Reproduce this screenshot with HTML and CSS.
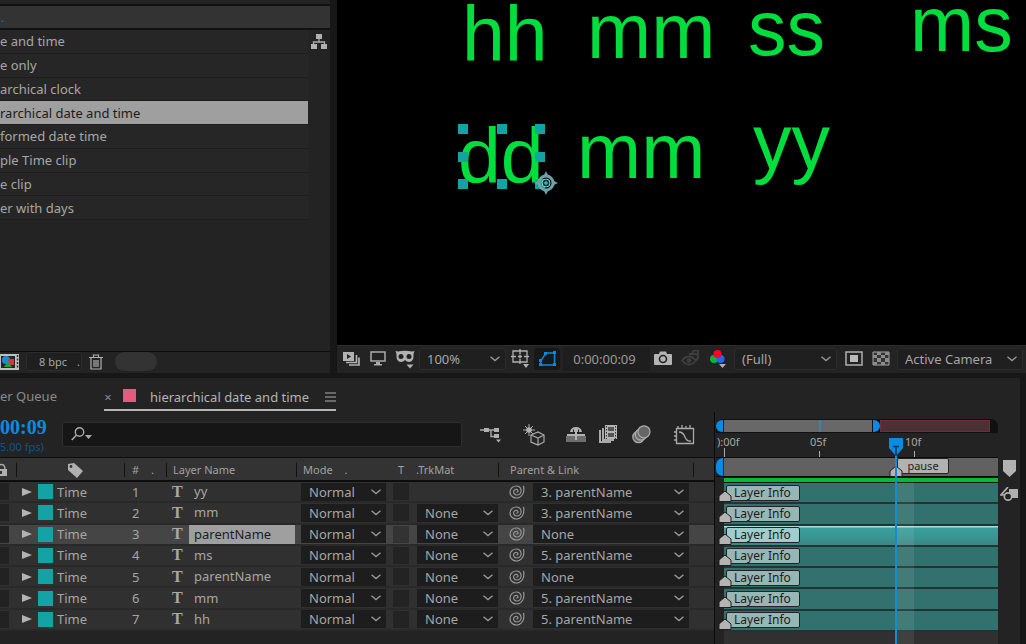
FILE: index.html
```html
<!DOCTYPE html>
<html lang="en">
<head>
<meta charset="utf-8">
<title>hierarchical date and time</title>
<link rel="stylesheet" href="styles.css">
</head>
<body>
<svg class="defs" aria-hidden="true">
  <symbol id="chev" viewBox="0 0 10 6"><path d="M.5.8 5 4.6 9.5.8" fill="none" stroke="#999" stroke-width="1.3"/></symbol>
  <symbol id="whip" viewBox="0 0 16 14"><path d="M14.5.8C15.5 6 14.2 10.2 10.5 12.2 6 14.4 1 11.500 1 7 1 3 4.500.8 7.700 1 11 1.200 12.500 4 12 6.500 11.500 9 9.500 10 7.800 10 5.800 10 4.500 8.500 4.600 6.800 4.700 5.200 6 4.200 7.500 4.300 9 4.500 9.300 6 8.600 6.800L7.300 7.200" fill="none" stroke="#969696" stroke-width="1.200"/></symbol>
  <symbol id="flag" viewBox="0 0 14 12"><path d="M1 11.500V6L7 1l6 5v5.500z" fill="#b4b4b4" stroke="#1c1c1c"/></symbol>
</svg>

<main class="workspace">
  <section class="project" aria-label="Project">
    <div class="project-head">.</div>
    <div class="project-body">
      <ul class="items">
        <li>e and time</li>
        <li>e only</li>
        <li>archical clock</li>
        <li class="selected">rarchical date and time</li>
        <li>formed date time</li>
        <li>ple Time clip</li>
        <li>e clip</li>
        <li>er with days</li>
      </ul>
      <button class="flow" aria-label="Project flowchart"><svg width="18" height="17" viewBox="0 0 18 17"><path d="M9 5v4M3.500 11V9h11v2" fill="none" stroke="#aaa" stroke-width="1.300"/><path d="M6 1h6v5H6zM1 11h6v5H1zM11 11h6v5h-6z" fill="#b0b0b0"/></svg></button>
    </div>
    <footer class="project-foot">
      <button class="interpret" aria-label="Interpret footage"><svg width="19" height="16" viewBox="0 0 19 16"><path fill="#c0c0c0" d="M0 0h19v16H0z"/><path fill="#252525" d="M1 2h14v12H1z"/><path d="M17.500 1v14" stroke="#333" stroke-width="1.500" stroke-dasharray="2 1.500"/><circle cx="6" cy="6" r="4" fill="#168cdf"/><path fill="#ef2944" d="M8 5h6v6H8z"/><path fill="#17a63a" d="M8 7l4 6H4z"/></svg></button>
      <button class="depth"><span>8 bpc</span><span>.</span></button>
      <button class="trash" aria-label="Delete"><svg width="14" height="16" viewBox="0 0 14 16"><path d="M0 3.500h14M4.500 3V1h5v2M2 4v11h10V4M5 6v7M7 6v7M9 6v7" fill="none" stroke="#b0b0b0" stroke-width="1.200"/></svg></button>
      <span class="thumb"></span>
    </footer>
  </section>

  <section class="viewer" aria-label="Composition">
    <div class="canvas">
      <span class="glyph hh">hh</span><span class="glyph min">mm</span><span class="glyph ss">ss</span><span class="glyph ms">ms</span>
      <span class="glyph dd">dd</span><span class="glyph mon">mm</span><span class="glyph yy">yy</span>
      <svg class="handles" width="102" height="72" viewBox="0 0 102 72"><path fill="#13a3a5" d="M1 0h10v10H1zM40 0h10v10H40zM78 0h10v10H78zM1 28h10v10H1zM78 28h10v10H78zM1 55h10v10H1zM40 55h10v10H40zM78 55h10v10H78z"/><g transform="translate(89 59)"><path fill="#719da0" d="M-2-8 0-12 2-8zM-2 8 0 12 2 8zM-8-2-12 0-8 2zM8-2 12 0 8 2z"/><circle r="7" fill="none" stroke="#6ea4a7" stroke-width="3"/><circle r="4" fill="#073238" stroke="#8bd0d1"/><path d="M-2 0h4M0-2v4" stroke="#3eb4b6" stroke-width="1.500"/></g></svg>
    </div>
    <div class="viewer-bar">
      <button aria-label="Always preview"><svg width="17" height="14" viewBox="0 0 17 14"><path fill="#b2b2b2" d="M0 0h11v9H0z"/><path fill="#222" d="M4 2l4 2.500L4 7z"/><path d="M13.500 3v7.500H3M16 5.500V13H6" fill="none" stroke="#b2b2b2" stroke-width="1.700"/></svg></button>
      <button aria-label="Main viewer"><svg width="16" height="15" viewBox="0 0 16 15"><path d="M1 1h14v9H1z" fill="none" stroke="#aaa" stroke-width="1.500"/><path fill="#aaa" d="M6 11h4v2h2v1.500H4V13h2z"/></svg></button>
      <button aria-label="Mask view"><svg width="20" height="20" viewBox="0 0 20 20"><path fill="#b2b2b2" d="M3 2.500Q10 1 17 2.500l2.500-.5-1 3Q19 13 14 13q-2.500 0-4-2-1.500 2-4 2-5 0-4.500-8l-1-3zM11.500 15.500h7l-3.500 4z"/><circle cx="6" cy="7.500" r="2.500" fill="#222"/><circle cx="14" cy="7.500" r="2.500" fill="#222"/></svg></button>
      <span class="drop boxed"><select aria-label="Magnification"><option>100%</option></select><svg><use href="#chev"/></svg></span>
      <button aria-label="Grid and guides"><svg width="19" height="19" viewBox="0 0 19 19"><path d="M2 2h14v11H2zM9 0v5M9 10v5M0 7.500h5M13 7.500h5M7 7.500h4M9 5.500v4" fill="none" stroke="#b0b0b0" stroke-width="1.300"/><path fill="#b0b0b0" d="M12 15h6l-3 4z"/></svg></button>
      <button class="toggle" aria-label="Toggle mask visibility"><svg width="19" height="16" viewBox="0 0 19 16"><path d="M2.500 14 3 9.500 8 2h8.500v12z" fill="none" stroke="#078be2" stroke-width="1.400"/><path fill="#078be2" d="M1 12h3v3H1zM1 8h3v3H1zM6 1h3v3H6zM15 0h3v3h-3zM15 12h3v3h-3z"/></svg></button>
      <span class="clock">0:00:00:09</span>
      <button aria-label="Snapshot"><svg width="18" height="15" viewBox="0 0 18 15"><path fill="#b4b4b4" d="M1 3h4l1-2.500h6L13 3h4q1 0 1 1v9q0 1-1 1H1q-1 0-1-1V4q0-1 1-1z"/><circle cx="9" cy="8" r="3.500" fill="none" stroke="#222" stroke-width="1.600"/></svg></button>
      <button aria-label="Show snapshot"><svg width="19" height="17" viewBox="0 0 19 17"><path d="M1 10.500q7-8 14 0-7 8-14 0zM8 4h6q3 0 3 3t-3 3M11 3l2-2.500h4V5" fill="none" stroke="#3f3f3f" stroke-width="1.800"/><circle cx="8" cy="10.500" r="2.300" fill="#3f3f3f"/></svg></button>
      <button aria-label="Channels"><svg width="16" height="18" viewBox="0 0 16 18"><circle cx="4" cy="9" r="4" fill="#04b83d"/><circle cx="10.500" cy="9" r="4" fill="#2368f5"/><circle cx="7.500" cy="4" r="4" fill="#fa0528"/><path fill="#b0b0b0" d="M9 14h7l-3.500 4z"/></svg></button>
      <span class="drop boxed"><select aria-label="Resolution"><option>(Full)</option></select><svg><use href="#chev"/></svg></span>
      <button aria-label="Region of interest"><svg width="18" height="15" viewBox="0 0 18 15"><path d="M1 1h16v13H1z" fill="none" stroke="#b0b0b0" stroke-width="1.500"/><path fill="#b8b8b8" d="M5 4h8v7H5z"/></svg></button>
      <button aria-label="Transparency grid"><svg width="18" height="15" viewBox="0 0 18 15"><path d="M1 1h16v13H1z" fill="#343434" stroke="#a5a5a5"/><path fill="#8c8c8c" d="M5 1h4v3H5zM13 1h4v3h-4zM1 4h4v3H1zM9 4h4v3H9zM5 7h4v4H5zM13 7h4v4h-4zM1 11h4v3H1zM9 11h4v3H9z"/></svg></button>
      <span class="drop boxed"><select aria-label="View"><option>Active Camera</option></select><svg><use href="#chev"/></svg></span>
    </div>
  </section>

  <section class="timeline" aria-label="Timeline">
    <nav class="tabs">
      <a class="queue" href="#queue">er Queue</a>
      <div class="tab"><button aria-label="Close tab">×</button><i></i><a href="#comp">hierarchical date and time</a><button aria-label="Panel menu"><svg width="11" height="10" viewBox="0 0 11 10"><path d="M0 1h11M0 5h11M0 9h11" stroke="#b0b0b0"/></svg></button></div>
    </nav>
    <div class="lower">
      <div class="layers">
        <div class="tools">
          <div class="timecode"><b>00:09</b><span>5.00 fps)</span></div>
          <label class="search"><svg width="22" height="15" viewBox="0 0 22 15"><circle cx="8.500" cy="5" r="4.200" fill="none" stroke="#aaa" stroke-width="1.400"/><path d="M5.500 8 .8 13" stroke="#aaa" stroke-width="1.600"/><path fill="#aaa" d="M14 8h7l-3.500 4z"/></svg><input type="search" aria-label="Search layers"></label>
          <div class="switches">
            <button aria-label="Mini-flowchart"><svg width="22" height="16" viewBox="0 0 22 16"><path d="M0 3h15M11 3v6.500h4" fill="none" stroke="#aaa" stroke-width="1.400"/><path fill="#b0b0b0" d="M4 1h5v4H4zM14 1h5v4h-5zM14 7h5v4h-5zM16 12.500h5l-2.500 3z"/></svg></button>
            <button aria-label="Draft 3D"><svg width="22" height="22" viewBox="0 0 22 22"><path d="M6 0v12M0 6h12M2 2l8 8M10 2l-8 8" stroke="#aaa" stroke-width="1"/><circle cx="6" cy="6" r="2.800" fill="#b2b2b2"/><path d="M8 11l7-3 6 3v7l-6 3-7-3zM8 11l7 3 6-3M15 14v7" fill="#252525" stroke="#aaa" stroke-width="1.200"/></svg></button>
            <button aria-label="Hide shy layers"><svg width="20" height="15" viewBox="0 0 20 15"><path fill="#6d6d6d" d="M0 9h20v6H0z"/><path fill="#b2b2b2" d="M1 7h18v2H1zM4 5q1-5 6-5t6 5zM9 4h2v9H9z"/><path d="M7.500 2.500V7M12.500 2.500V7" stroke="#222"/></svg></button>
            <button aria-label="Frame blending"><svg width="18" height="19" viewBox="0 0 18 19"><path fill="#a8a8a8" d="M0 5h2v11h10v2H0zM3 3h2v11h10v2H3z"/><path fill="#b5b5b5" d="M6 0h12v14H6z"/><path d="M7.500 1v13M16.500 1v13" stroke="#333" stroke-dasharray="1.500 1.500"/><path fill="#555" d="M9 2h6v4H9zM9 8h6v4H9z"/></svg></button>
            <button aria-label="Motion blur"><svg width="19" height="19" viewBox="0 0 19 19"><g fill="#666" stroke="#aaa" stroke-width="1.300"><circle cx="6.500" cy="12" r="5.700"/><circle cx="9" cy="9.500" r="5.700"/><circle cx="12" cy="6.800" r="6"/></g></svg></button>
            <button aria-label="Graph editor"><svg width="21" height="20" viewBox="0 0 21 20"><path d="M2.500 3.500h17v15h-17zM4 1v2M8 0v3M12 1v2M16 0v3M0 7h2M0 11h2M0 15h2M5 7q4 0 6 5t6 4" fill="none" stroke="#aaa" stroke-width="1.300"/></svg></button>
          </div>
        </div>
        <table class="grid">
          <thead><tr>
            <th><svg width="9" height="14" viewBox="0 0 9 14"><path d="M0 1.700q5-1.500 5 5" fill="none" stroke="#aaa" stroke-width="1.500"/><path fill="#b0b0b0" d="M0 6h7v7H0z"/><path fill="#333" d="M0 8h2v3H0z"/></svg></th>
            <th class="tagcol"><svg width="16" height="15" viewBox="0 0 16 15"><path fill="#b0b0b0" d="M1 1 7 0l9 8-6 7-9-8z"/><circle cx="4" cy="3.500" r="1.400" fill="#333"/></svg></th>
            <th class="num">#<span>.</span></th>
            <th class="namehead">Layer Name</th>
            <th class="modehead">Mode<span>.</span></th>
            <th class="matte">T</th>
            <th class="trk">.TrkMat</th>
            <th class="parenthead" colspan="2">Parent &amp; Link</th>
          </tr></thead>
          <tbody>
            <tr><td><i class="lock"></i></td><td class="label"><button aria-label="Expand layer 1"></button><i></i>Time</td><td class="num">1</td><td class="name"><b>T</b><span>yy</span></td><td><span class="drop"><select aria-label="Mode 1"><option>Normal</option></select><svg><use href="#chev"/></svg></span></td><td><i class="check"></i></td><td></td><td class="whip"><svg><use href="#whip"/></svg></td><td><span class="drop"><select aria-label="Parent 1"><option>3. parentName</option></select><svg><use href="#chev"/></svg></span></td></tr>
            <tr><td><i class="lock"></i></td><td class="label"><button aria-label="Expand layer 2"></button><i></i>Time</td><td class="num">2</td><td class="name"><b>T</b><span>mm</span></td><td><span class="drop"><select aria-label="Mode 2"><option>Normal</option></select><svg><use href="#chev"/></svg></span></td><td><i class="check"></i></td><td><span class="drop"><select aria-label="Track matte 2"><option>None</option></select><svg><use href="#chev"/></svg></span></td><td class="whip"><svg><use href="#whip"/></svg></td><td><span class="drop"><select aria-label="Parent 2"><option>3. parentName</option></select><svg><use href="#chev"/></svg></span></td></tr>
            <tr class="selected"><td><i class="lock"></i></td><td class="label"><button aria-label="Expand layer 3"></button><i></i>Time</td><td class="num">3</td><td class="name"><b>T</b><span>parentName</span></td><td><span class="drop"><select aria-label="Mode 3"><option>Normal</option></select><svg><use href="#chev"/></svg></span></td><td><i class="check"></i></td><td><span class="drop"><select aria-label="Track matte 3"><option>None</option></select><svg><use href="#chev"/></svg></span></td><td class="whip"><svg><use href="#whip"/></svg></td><td><span class="drop"><select aria-label="Parent 3"><option>None</option></select><svg><use href="#chev"/></svg></span></td></tr>
            <tr><td><i class="lock"></i></td><td class="label"><button aria-label="Expand layer 4"></button><i></i>Time</td><td class="num">4</td><td class="name"><b>T</b><span>ms</span></td><td><span class="drop"><select aria-label="Mode 4"><option>Normal</option></select><svg><use href="#chev"/></svg></span></td><td><i class="check"></i></td><td><span class="drop"><select aria-label="Track matte 4"><option>None</option></select><svg><use href="#chev"/></svg></span></td><td class="whip"><svg><use href="#whip"/></svg></td><td><span class="drop"><select aria-label="Parent 4"><option>5. parentName</option></select><svg><use href="#chev"/></svg></span></td></tr>
            <tr><td><i class="lock"></i></td><td class="label"><button aria-label="Expand layer 5"></button><i></i>Time</td><td class="num">5</td><td class="name"><b>T</b><span>parentName</span></td><td><span class="drop"><select aria-label="Mode 5"><option>Normal</option></select><svg><use href="#chev"/></svg></span></td><td><i class="check"></i></td><td><span class="drop"><select aria-label="Track matte 5"><option>None</option></select><svg><use href="#chev"/></svg></span></td><td class="whip"><svg><use href="#whip"/></svg></td><td><span class="drop"><select aria-label="Parent 5"><option>None</option></select><svg><use href="#chev"/></svg></span></td></tr>
            <tr><td><i class="lock"></i></td><td class="label"><button aria-label="Expand layer 6"></button><i></i>Time</td><td class="num">6</td><td class="name"><b>T</b><span>mm</span></td><td><span class="drop"><select aria-label="Mode 6"><option>Normal</option></select><svg><use href="#chev"/></svg></span></td><td><i class="check"></i></td><td><span class="drop"><select aria-label="Track matte 6"><option>None</option></select><svg><use href="#chev"/></svg></span></td><td class="whip"><svg><use href="#whip"/></svg></td><td><span class="drop"><select aria-label="Parent 6"><option>5. parentName</option></select><svg><use href="#chev"/></svg></span></td></tr>
            <tr><td><i class="lock"></i></td><td class="label"><button aria-label="Expand layer 7"></button><i></i>Time</td><td class="num">7</td><td class="name"><b>T</b><span>hh</span></td><td><span class="drop"><select aria-label="Mode 7"><option>Normal</option></select><svg><use href="#chev"/></svg></span></td><td><i class="check"></i></td><td><span class="drop"><select aria-label="Track matte 7"><option>None</option></select><svg><use href="#chev"/></svg></span></td><td class="whip"><svg><use href="#whip"/></svg></td><td><span class="drop"><select aria-label="Parent 7"><option>5. parentName</option></select><svg><use href="#chev"/></svg></span></td></tr>
          </tbody>
        </table>
      </div>

      <div class="time">
        <div class="navigator"><i class="cap left"></i><i class="range"></i><i class="cap right"></i><i class="rest"></i></div>
        <div class="ruler"><span class="t0">):00f</span><span class="t5">05f</span><span class="t10">10f</span></div>
        <div class="work"><i class="cap left"></i><div class="area"><span class="marker">pause</span><svg class="pause-flag" width="14" height="12"><use href="#flag"/></svg></div></div>
        <div class="cache"></div>
        <div class="tracks">
          <div class="track"><svg width="14" height="12"><use href="#flag"/></svg><span class="marker">Layer Info</span></div>
          <div class="track"><svg width="14" height="12"><use href="#flag"/></svg><span class="marker">Layer Info</span></div>
          <div class="track selected"><svg width="14" height="12"><use href="#flag"/></svg><span class="marker">Layer Info</span></div>
          <div class="track"><svg width="14" height="12"><use href="#flag"/></svg><span class="marker">Layer Info</span></div>
          <div class="track"><svg width="14" height="12"><use href="#flag"/></svg><span class="marker">Layer Info</span></div>
          <div class="track"><svg width="14" height="12"><use href="#flag"/></svg><span class="marker">Layer Info</span></div>
          <div class="track"><svg width="14" height="12"><use href="#flag"/></svg><span class="marker">Layer Info</span></div>
        </div>
        <div class="below"></div>
        <i class="frame"></i>
        <svg class="head" width="14" height="18" viewBox="0 0 14 18"><path fill="#088be3" d="M0 0h14v10l-7 8-7-8z"/><path d="M4 8.500h6M7 8v9" stroke="#173650" stroke-width="1.500"/></svg>
        <i class="playhead"></i>
      </div>

      <div class="side">
        <button aria-label="Composition marker bin"><svg width="15" height="17" viewBox="0 0 15 17"><path fill="#b2b2b2" d="M1 0h13v11l-6.500 6L1 11z"/></svg></button>
        <button aria-label="Composition button"><svg width="18" height="15" viewBox="0 0 18 15"><path fill="#b0b0b0" d="M9 2h9v9H9z"/><path d="M8 0 1 8h9" fill="none" stroke="#b0b0b0" stroke-width="1.700"/><circle cx="8" cy="9.500" r="3.700" fill="#222" stroke="#b0b0b0" stroke-width="1.700"/></svg></button>
      </div>
    </div>
  </section>
</main>
</body>
</html>
```
FILE: styles.css
```css
* { box-sizing: border-box; }
body { margin: 0; background: #171717; color: #a6a6a6; font: 13px/18px "Noto Sans", "Open Sans", sans-serif; }
button, select, input { font: inherit; color: inherit; background: none; border: 0; margin: 0; padding: 0; }
button { display: grid; place-items: center; }
svg { display: block; }
i { font-style: normal; }
a { color: inherit; text-decoration: none; }
.defs { position: absolute; width: 0; height: 0; }

.workspace { display: grid; grid-template: 1fr auto / 330px 1fr; column-gap: 6px; row-gap: 5px; min-height: 100vh; overflow: hidden; }

/* Project panel */
.project { display: flex; flex-direction: column; background: #232323; padding-top: 4px; }
.project-head { height: 26px; background: #333; border-top: 2px solid #111; border-bottom: 2px solid #111; color: #3c78a0; font-size: 11px; line-height: 23px; padding-left: 1px; }
.project-body { display: flex; flex: 1; }
.items { list-style: none; margin: 0; padding: 0; width: 308px; height: 190px; display: grid; grid-template-rows: repeat(8, 1fr); }
.items li { display: flex; align-items: center; background: #262626; border-bottom: 1px solid #1d1d1d; white-space: nowrap; }
.items .selected { background: #9f9f9f; color: #1c1c1c; }
.flow { width: 22px; height: 22px; }
.project-foot { display: flex; align-items: center; height: 22px; border-top: 1px solid #0c0c0c; padding-bottom: 2px; }
.interpret { width: 19px; }
.depth { display: flex; justify-content: space-between; width: 56px; margin-left: 7px; padding: 0 1px 0 12px; height: 19px; font-size: 11px; background: #1f1f1f; border: 1px solid #2b2b2b; border-radius: 3px; }
.trash { margin-left: 7px; }
.thumb { width: 42px; height: 19px; border-radius: 10px; background: #333; margin-left: 12px; }

/* Composition viewer */
.viewer { display: flex; flex-direction: column; min-width: 0; background: #232323; border-left: 1px solid #151515; }
.canvas { position: relative; flex: 1; min-height: 345px; background: #000; overflow: hidden; }
.glyph { position: absolute; font: 77px/80px "Liberation Sans", Arial, sans-serif; color: #00de3d; }
.hh { left: 125px; top: -6px; }
.min { left: 250px; top: -9px; }
.ss { left: 411px; top: -12px; }
.ms { left: 573px; top: -16px; }
.dd { left: 121px; top: 116px; }
.mon { left: 240px; top: 111px; }
.yy { left: 416px; top: 102px; }
.handles { position: absolute; left: 120px; top: 124px; }
.viewer-bar { display: grid; grid-template-columns: 22px 32px 22px 93px 22px 32px 87px 25px 30px 26px 109px 28px 26px 1fr; align-items: center; height: 28px; padding: 0 0 2px 3px; border-top: 1px solid #2c2c2c; }
.clock { text-align: center; background: #1e1e1e; line-height: 24px; color: #999; padding-right: 4px; }
.toggle { width: 26px; height: 22px; margin: 0 auto; background: #181818; border-radius: 3px; }

.drop { display: grid; grid-template-columns: 1fr 10px; align-items: center; background: #1d1d1d; min-width: 0; padding-right: 5px; }
.drop select { grid-area: 1 / 1 / 2 / 3; appearance: none; width: 100%; height: 18px; line-height: 18px; padding-left: 8px; outline: 0; }
.drop svg { grid-area: 1 / 2; width: 10px; height: 6px; pointer-events: none; }
.boxed { height: 22px; margin: 0 3px; background: #1f1f1f; border: 1px solid #2c2c2c; border-radius: 3px; }
.boxed select { padding-left: 7px; }

/* Timeline panel */
.timeline { grid-column: 1 / 3; background: #232323; margin-right: 6px; }
.tabs { display: flex; height: 34px; align-items: start; line-height: 32px; }
.queue { width: 104px; color: #8a8a8a; padding-top: 2px; }
.tab { display: grid; grid-template-columns: 8px 13px 1fr 12px; column-gap: 11px; align-items: center; width: 232px; height: 33px; padding-top: 3px; border-bottom: 2px solid #b5b5b5; color: #b4b4b4; }
.tab i { width: 13px; height: 13px; background: #e55b7d; margin-bottom: 3px; }
.tab a { padding-left: 3px; white-space: nowrap; }
.tab button { color: #8c8c8c; }

.lower { display: grid; grid-template-columns: 715px 1fr 22px; }
.tools { display: flex; align-items: center; height: 45px; }
.timecode { width: 62px; display: flex; flex-direction: column; color: #0a8be0; white-space: nowrap; padding-top: 3px; }
.timecode b { font: bold 20px/21px "Liberation Serif", "Times New Roman", serif; }
.timecode span { font-size: 11px; line-height: 18px; color: #0b5686; }
.search { display: flex; align-items: center; width: 400px; height: 25px; padding-left: 8px; background: #161616; border: 1px solid #2e2e2e; border-radius: 3px; }
.search input { flex: 1; min-width: 0; outline: 0; }
.switches { display: grid; grid-template-columns: 44px 42px 42px 22px 44px 42px; margin-left: 7px; flex: 1; }
.switches button { min-width: 0; }

.layers { border-right: 1px solid #0b0b0b; }
.grid { display: block; }
.grid tr { display: grid; grid-template-columns: 17px 108px 42px 130px 91px 28px 83px 34px 1fr; align-items: stretch; }
.grid thead { display: block; }
.grid thead tr { height: 25px; background: #333; border-top: 1px solid #0d0d0d; border-bottom: 2px solid #0d0d0d; padding-right: 20px; }
.grid th { position: relative; display: flex; align-items: center; padding: 2px 0 0; font-size: 11px; font-weight: 400; color: #a0a0a0; }
.grid th::after { content: ""; position: absolute; right: 0; top: 5px; height: 14px; border-right: 1px solid #111; }
.grid .modehead::after, .grid .matte::after { display: none; }
.grid .tagcol { padding-left: 50px; }
.grid th.num { padding-left: 7px; gap: 12px; }
.grid .namehead { padding-left: 6px; }
.grid .modehead { padding-left: 6px; gap: 12px; }
.grid .matte { padding-left: 10px; }
.grid .parenthead { grid-column: 8 / 10; padding-left: 11px; }
.grid tbody { display: grid; grid-template-rows: repeat(7, 1fr); height: 149px; }
.grid tbody tr { background: #303030; border-bottom: 2px solid #292929; }
.grid tbody .selected { background: #454545; }
.grid td { display: grid; align-items: center; padding: 0; min-width: 0; }
.lock { width: 9px; height: 17px; background: #222; }
.check { width: 16px; height: 17px; margin-left: 5px; background: #232323; }
.selected .check { background: #333; }
.grid .label { display: flex; padding-left: 5px; gap: 4px; }
.label button { width: 0; height: 0; border: solid transparent; border-width: 4px 0 4px 10px; border-left-color: #b3b3b3; margin-right: 2px; }
.label i { width: 15px; height: 15px; background: #14a3a4; }
.grid td.num { padding-left: 7px; }
.grid .name { display: flex; padding-left: 5px; }
.name b { width: 17px; font: bold 16px/18px "Liberation Serif", serif; color: #a8a8a8; }
.name span { padding-left: 5px; line-height: 19px; }
.selected .name span { background: #9f9f9f; color: #1d1d1d; width: 106px; }
.grid td .drop { height: 18px; }
.grid td:nth-child(5) .drop { margin-left: 4px; width: 85px; }
.grid td:nth-child(7) .drop { margin-left: 1px; width: 81px; }
.grid td:nth-child(9) .drop { width: 156px; }
.whip svg { width: 16px; height: 14px; margin-left: 10px; }

/* Time graph */
.time { position: relative; display: flex; flex-direction: column; padding-top: 7px; padding-left: 1px; min-width: 0; }
.navigator { display: flex; height: 14px; padding: 1px 8px 1px 0; background: #101010; border-radius: 7px 7px 0 0; }
.cap { width: 7px; background: #088be3; }
.cap.left { border-radius: 7px 0 0 7px; }
.cap.right { border-radius: 0 7px 7px 0; }
.range { width: 148px; background: linear-gradient(90deg, transparent 95px, #3d83b0 95px, #3d83b0 97px, transparent 97px) #686868; margin: 0 1px; }
.rest { flex: 1; background: #4c3034; border: 1px solid #742c3c; }
.ruler { position: relative; height: 24px; font-size: 11px; line-height: 17px; }
.ruler span { position: absolute; top: 0; height: 24px; }
.ruler span::after { content: ""; position: absolute; bottom: 0; left: 9px; height: 6px; border-left: 1px solid #aaa; }
.t0 { left: 1px; }
.ruler .t0::after { left: 7px; height: 9px; }
.t5 { left: 94px; }
.t10 { left: 189px; }
.work { display: flex; height: 20px; border-top: 1px solid #0b0b0b; border-bottom: 1px solid #0b0b0b; }
.work .left { margin-right: 1px; }
.area { position: relative; flex: 1; background: #616161; }
.marker { display: block; font-size: 12px; line-height: 14px; color: #1d1d1d; border: 1px solid #222; border-radius: 2px; }
.area .marker { position: absolute; left: 173px; top: 0; width: 52px; background: #b2b2b2; text-align: center; font-size: 11px; }
.pause-flag { position: absolute; left: 165px; top: 7px; }
.cache { height: 6px; margin-left: 8px; background: #04ba38; border-top: 1px solid #111; border-bottom: 1px solid #111; }
.tracks { display: grid; grid-template-rows: repeat(7, 1fr); height: 149px; margin-left: 8px; }
.track { display: grid; grid-template-columns: 2px 74px; align-items: center; background: #32716e; border-bottom: 2px solid #223332; }
.track.selected { background: linear-gradient(#a8ded9 1px, #38a09e 2px, #389491 12px, #3e8582); }
.track svg { grid-area: 1 / 1; margin: 7px 0 0 -6px; z-index: 1; align-self: start; }
.track .marker { grid-area: 1 / 2; height: 16px; background: #98b6b4; padding-left: 7px; }
.track.selected .marker { background: #a0cecc; }
.below { flex: 1; min-height: 12px; margin-left: 8px; background: #303030; }
.frame { position: absolute; left: 182px; width: 17px; top: 70px; bottom: 0; background: #ffffff14; }
.head { position: absolute; left: 174px; top: 26px; }
.playhead { position: absolute; left: 180px; top: 44px; bottom: 0; border-left: 2px solid #168bd0; }
.side { padding-top: 48px; display: grid; grid-auto-rows: 16px; gap: 10px; align-content: start; justify-items: center; }
```
